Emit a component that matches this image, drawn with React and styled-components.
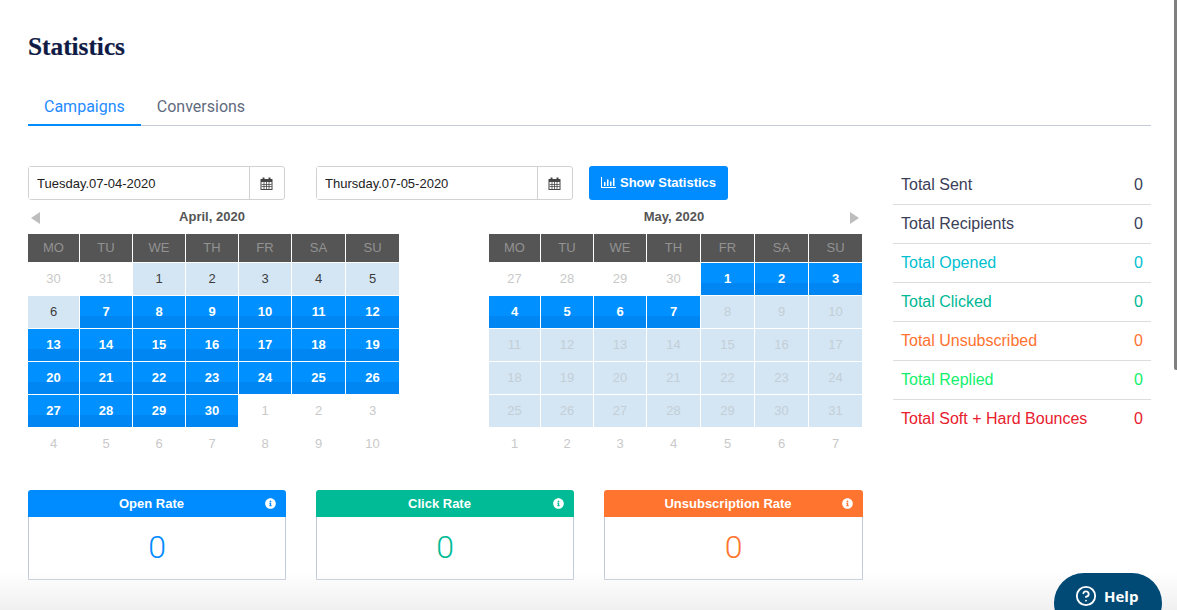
import React from "react";
import styled, { createGlobalStyle } from "styled-components";
import { FaInfoCircle } from "react-icons/fa";
import { CircleHelp } from "lucide-react";

const APRIL = [
  ["30", "muted"], ["31", "muted"], ["1", "range"], ["2", "range"], ["3", "range"], ["4", "range"], ["5", "range"],
  ["6", "range"], ["7", "sel"], ["8", "sel"], ["9", "sel"], ["10", "sel"], ["11", "sel"], ["12", "sel"],
  ["13", "sel"], ["14", "sel"], ["15", "sel"], ["16", "sel"], ["17", "sel"], ["18", "sel"], ["19", "sel"],
  ["20", "sel"], ["21", "sel"], ["22", "sel"], ["23", "sel"], ["24", "sel"], ["25", "sel"], ["26", "sel"],
  ["27", "sel"], ["28", "sel"], ["29", "sel"], ["30", "sel"], ["1", "muted"], ["2", "muted"], ["3", "muted"],
  ["4", "muted"], ["5", "muted"], ["6", "muted"], ["7", "muted"], ["8", "muted"], ["9", "muted"], ["10", "muted"],
];

const MAY = [
  ["27", "muted"], ["28", "muted"], ["29", "muted"], ["30", "muted"], ["1", "sel"], ["2", "sel"], ["3", "sel"],
  ["4", "sel"], ["5", "sel"], ["6", "sel"], ["7", "sel"], ["8", "faded"], ["9", "faded"], ["10", "faded"],
  ["11", "faded"], ["12", "faded"], ["13", "faded"], ["14", "faded"], ["15", "faded"], ["16", "faded"], ["17", "faded"],
  ["18", "faded"], ["19", "faded"], ["20", "faded"], ["21", "faded"], ["22", "faded"], ["23", "faded"], ["24", "faded"],
  ["25", "faded"], ["26", "faded"], ["27", "faded"], ["28", "faded"], ["29", "faded"], ["30", "faded"], ["31", "faded"],
  ["1", "muted"], ["2", "muted"], ["3", "muted"], ["4", "muted"], ["5", "muted"], ["6", "muted"], ["7", "muted"],
];

const WEEK = ["MO", "TU", "WE", "TH", "FR", "SA", "SU"];

const STATS = [
  ["Total Sent", "#3b4058"],
  ["Total Recipients", "#3b4058"],
  ["Total Opened", "#00bfd0"],
  ["Total Clicked", "#00b894"],
  ["Total Unsubscribed", "#ff7230"],
  ["Total Replied", "#10f06c"],
  ["Total Soft + Hard Bounces", "#e8202e"],
];

const RATES = [
  ["Open Rate", "#008cff"],
  ["Click Rate", "#00bb96"],
  ["Unsubscription Rate", "#ff7530"],
];

const CalendarIcon = () => (
  <svg width="13" height="13" viewBox="0 0 13 13" fill="#444">
    <path d="M0.5 2H2.5V0.5H4.5V2H8.5V0.5H10.5V2H12.5V13H0.5ZM1.5 5V12H11.5V5Z" />
    <path d="M3.6 5V12H4.4V5ZM6.1 5V12H6.9V5ZM8.6 5V12H9.4V5ZM1.5 6.9V7.7H11.5V6.9ZM1.5 9.2V10H11.5V9.2Z" />
  </svg>
);

const BarsIcon = () => (
  <svg width="15" height="11" viewBox="0 0 15 11" fill="#fff">
    <path d="M0 0H1V10H15V11H0Z" />
    <path d="M3 5H4.5V9H3ZM6 2.5H7.5V9H6ZM9 4.5H10.5V9H9ZM12 1H13.5V9H12Z" />
  </svg>
);

const Calendar = ({ title, cells, columns, side }) => (
  <CalendarBox>
    <MonthBar>
      <span>{side === "left" && <Arrow $side="left" />}</span>
      <MonthTitle>{title}</MonthTitle>
      <ArrowSlot>{side === "right" && <Arrow $side="right" />}</ArrowSlot>
    </MonthBar>
    <Grid $columns={columns}>
      {WEEK.map((day) => (
        <WeekDay key={day}>{day}</WeekDay>
      ))}
      {cells.map(([label, kind], i) => (
        <Day key={i} $kind={kind}>
          {label}
        </Day>
      ))}
    </Grid>
  </CalendarBox>
);

const DateField = ({ value }) => (
  <InputGroup>
    <DateInput readOnly value={value} />
    <Addon>
      <CalendarIcon />
    </Addon>
  </InputGroup>
);

const App = () => (
  <Page>
    <GlobalStyle />
    <Title>Statistics</Title>
    <Tabs>
      <Tab $active>Campaigns</Tab>
      <Tab>Conversions</Tab>
    </Tabs>
    <Content>
      <Main>
        <Controls>
          <DateField value="Tuesday.07-04-2020" />
          <DateField value="Thursday.07-05-2020" />
          <ShowButton>
            <BarsIcon />
            Show Statistics
          </ShowButton>
        </Controls>
        <Calendars>
          <Calendar title="April, 2020" cells={APRIL} side="left" columns="51px repeat(4, 52px) 53px 53px" />
          <Calendar title="May, 2020" cells={MAY} side="right" columns="51px 52px 52px repeat(4, 53px)" />
        </Calendars>
        <Rates>
          {RATES.map(([label, color]) => (
            <RateCard key={label}>
              <RateHead $color={color}>
                <RateLabel>{label}</RateLabel>
                <FaInfoCircle size={11} />
              </RateHead>
              <RateValue $color={color}>0</RateValue>
            </RateCard>
          ))}
        </Rates>
      </Main>
      <Aside>
        {STATS.map(([label, color]) => (
          <StatRow key={label} $color={color}>
            <span>{label}</span>
            <span>0</span>
          </StatRow>
        ))}
      </Aside>
    </Content>
    <BottomFade />
    <ScrollThumb />
    <HelpButton>
      <CircleHelp size={22} strokeWidth={2} />
      Help
    </HelpButton>
  </Page>
);

const GlobalStyle = createGlobalStyle`
  html, body {
    margin: 0;
    padding: 0;
    background: #fff;
    overflow: hidden;
  }
`;

const Page = styled.div`
  position: relative;
  box-sizing: border-box;
  width: 1177px;
  height: 610px;
  padding: 32px 26px 0 28px;
  overflow: hidden;
  background: #fff;
  font-family: "Liberation Sans", Arial, sans-serif;
`;

const Title = styled.h1`
  margin: 0;
  font-family: "Liberation Serif", Georgia, serif;
  font-size: 25.3px;
  line-height: 28px;
  font-weight: 700;
  color: #0f1a45;
  -webkit-text-stroke: 0.2px #0f1a45;
`;

const Tabs = styled.div`
  display: flex;
  height: 37px;
  margin-top: 29px;
  border-bottom: 1px solid #c4ccd8;
  box-sizing: border-box;
`;

const Tab = styled.div`
  height: 37px;
  box-sizing: border-box;
  padding: 8px 16px 0;
  font-family: Roboto, sans-serif;
  font-size: 16px;
  line-height: 20px;
  color: ${(p) => (p.$active ? "#1f8bff" : "#5f6b7e")};
  border-bottom: 2px solid ${(p) => (p.$active ? "#008cff" : "transparent")};
`;

const Content = styled.div`
  display: flex;
  gap: 30px;
  margin-top: 40px;
`;

const Main = styled.div`
  width: 835px;
`;

const Controls = styled.div`
  display: flex;
  height: 34px;
`;

const InputGroup = styled.div`
  display: flex;
  box-sizing: border-box;
  width: 257px;
  height: 34px;
  margin-right: 31px;
  border: 1px solid #d2d2d2;
  border-radius: 3px;
  &:nth-child(2) {
    margin-right: 16px;
  }
`;

const DateInput = styled.input`
  box-sizing: border-box;
  width: 221px;
  height: 100%;
  padding: 0 0 0 8px;
  border: 0;
  border-right: 1px solid #d2d2d2;
  outline: none;
  background: #fff;
  font-family: "Liberation Sans", Arial, sans-serif;
  font-size: 13px;
  color: #222;
`;

const Addon = styled.div`
  flex: 1;
  display: flex;
  align-items: center;
  justify-content: center;
  padding-right: 2px;
`;

const ShowButton = styled.button`
  display: flex;
  align-items: center;
  gap: 4px;
  box-sizing: border-box;
  width: 139px;
  height: 34px;
  padding: 0 0 1px 12px;
  border: 0;
  border-radius: 3px;
  background: #008cff;
  color: #fff;
  font-family: "Liberation Sans", Arial, sans-serif;
  font-size: 13px;
  font-weight: 700;
`;

const Calendars = styled.div`
  display: flex;
  gap: 90px;
`;

const CalendarBox = styled.div``;

const MonthBar = styled.div`
  display: grid;
  grid-template-columns: 1fr auto 1fr;
  height: 34px;
  box-sizing: border-box;
  padding: 10px 0 0 3px;
`;

const ArrowSlot = styled.span`
  justify-self: end;
  padding-right: 3px;
`;

const Arrow = styled.i`
  display: block;
  width: 0;
  height: 0;
  margin-top: 2px;
  border-top: 6px solid transparent;
  border-bottom: 6px solid transparent;
  ${(p) =>
    p.$side === "left"
      ? "border-right: 9px solid #bdbdbd;"
      : "border-left: 9px solid #bdbdbd;"}
`;

const MonthTitle = styled.div`
  margin-right: 6px;
  font-size: 13px;
  line-height: 14px;
  font-weight: 700;
  color: #555;
`;

const Grid = styled.div`
  display: grid;
  grid-template-columns: ${(p) => p.$columns};
  grid-template-rows: 28px repeat(6, 32px);
  gap: 1px;
`;

const WeekDay = styled.div`
  display: flex;
  align-items: center;
  justify-content: center;
  padding-bottom: 1px;
  background: #555;
  color: #929292;
  font-size: 13px;
`;

const DAY_STYLES = {
  muted: "background: #fff; color: #c9c9c9;",
  range: "background: #d4e6f4; color: #3c3c3c;",
  faded: "background: #d4e6f4; color: #c3ced6;",
  sel: "background: linear-gradient(#0090ff 62%, #0086f2 62%); color: #fff; font-weight: 700;",
};

const Day = styled.div`
  display: flex;
  align-items: center;
  justify-content: center;
  padding-bottom: 1px;
  font-size: 13px;
  ${(p) => DAY_STYLES[p.$kind]}
`;

const Rates = styled.div`
  display: grid;
  grid-template-columns: 258px 258px 259px;
  gap: 30px;
  margin-top: 30px;
`;

const RateCard = styled.div``;

const RateHead = styled.div`
  display: flex;
  align-items: center;
  height: 27px;
  padding: 0 10px;
  border-radius: 3px 3px 0 0;
  background: ${(p) => p.$color};
  color: #fff;
`;

const RateLabel = styled.div`
  flex: 1;
  text-align: center;
  font-size: 13px;
  font-weight: 700;
`;

const RateValue = styled.div`
  box-sizing: border-box;
  height: 63px;
  border: 1px solid #c0cbd9;
  border-top: 0;
  font-family: Roboto, sans-serif;
  font-size: 32px;
  font-weight: 300;
  line-height: 61px;
  text-align: center;
  color: ${(p) => p.$color};
`;

const Aside = styled.div`
  width: 258px;
`;

const StatRow = styled.div`
  display: flex;
  justify-content: space-between;
  align-items: center;
  box-sizing: border-box;
  height: 39px;
  padding: 0 8px;
  border-bottom: 1px solid #ddd;
  font-size: 16px;
  color: ${(p) => p.$color};
  &:last-child {
    border-bottom-color: transparent;
  }
`;

const BottomFade = styled.div`
  position: absolute;
  left: 0;
  right: 0;
  bottom: 0;
  height: 38px;
  background: linear-gradient(rgba(240, 240, 240, 0), #f0f0f0);
  pointer-events: none;
`;

const ScrollThumb = styled.div`
  position: absolute;
  top: 0;
  right: 0;
  width: 3px;
  height: 370px;
  border-radius: 0 0 0 2px;
  background: #7f7f7f;
`;

const HelpButton = styled.div`
  position: absolute;
  top: 573px;
  left: 1054px;
  display: flex;
  align-items: center;
  gap: 7px;
  box-sizing: border-box;
  width: 108px;
  height: 60px;
  padding: 0 0 14px 21px;
  border-radius: 30px;
  background: #004a75;
  color: #fff;
  font-family: "Open Sans", sans-serif;
  font-size: 15px;
  font-weight: 700;
`;

export default App;
